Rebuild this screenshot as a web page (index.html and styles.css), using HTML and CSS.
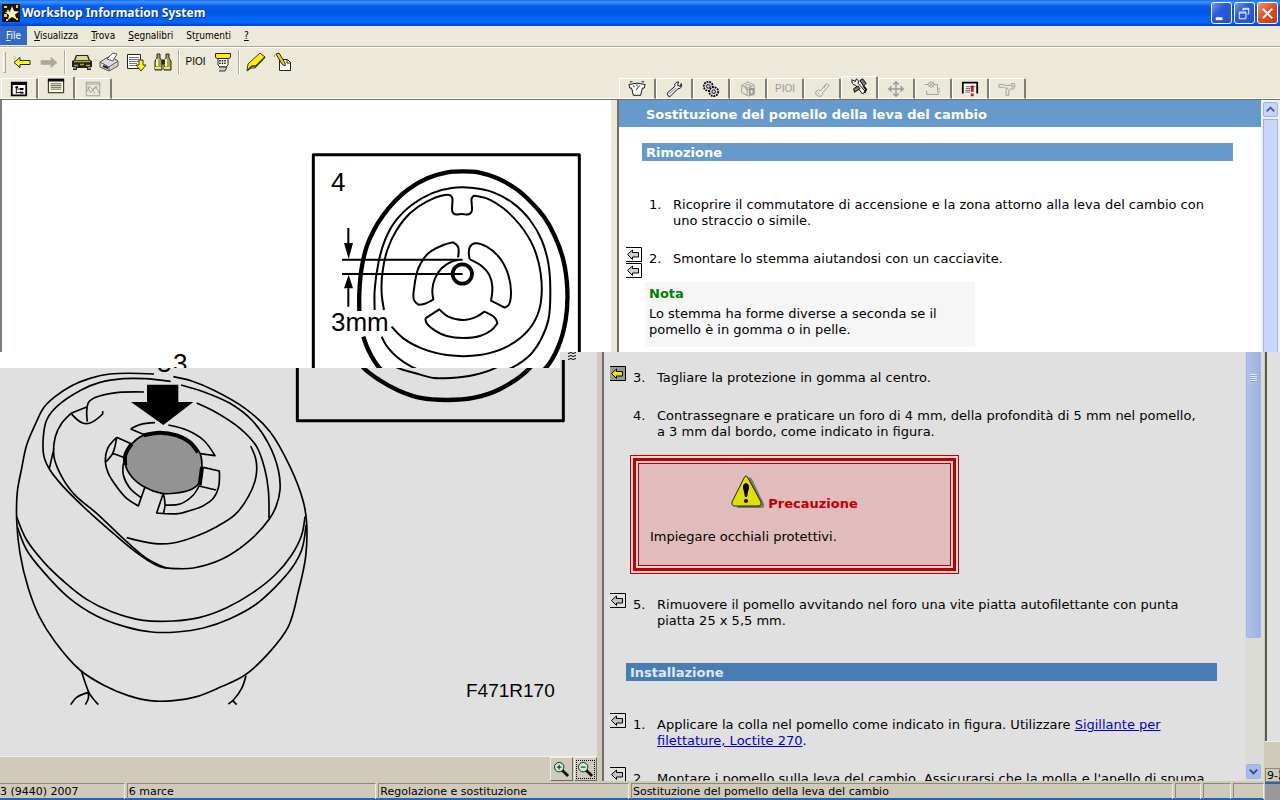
FILE: index.html
```html
<!DOCTYPE html>
<html lang="it">
<head>
<meta charset="utf-8">
<title>Workshop Information System</title>
<link rel="stylesheet" href="styles.css">
<script src="curves.js" defer></script>
</head>
<body>
<svg class="defs" aria-hidden="true">
  <defs>
    <g id="top-view" fill="none" stroke="#000" stroke-width="6" stroke-linejoin="round">
      <rect x="40" y="44" width="798" height="798" stroke-width="9"/>
      <path class="curve" stroke-width="13" d="M178 513L178 460L184 390L200 320L222 270L248 228L283 185L325 148L382 115L442 97L488 94L535 97L592 115L650 148L695 188L733 232L765 290L790 360L802 450L797 540L775 620L738 683L648 747L568 774L488 780L410 774L345 752L286 720L238 683L205 630L190 590"/>
      <path class="curve" d="M224 510L224 450L236 365L255 300L285 245L335 195L395 160L455 144L520 144L580 157L640 190L690 240L725 300L745 370L751 450L745 540L722 600L690 645L636 683L570 705L500 714L450 714L395 700L340 683L290 650L258 615L245 590"/>
      <path class="curve" d="M252 510L245 460L247 400L262 330L290 270L330 220L380 185L435 165L452 167L457 175L457 190L457 214L463 222L485 222L508 222L515 214L515 190L515 175L521 167L560 175L610 205L660 255L700 320L722 400L722 490L700 550L660 595L610 625L540 645L440 645L365 625L310 595L275 560"/>
      <path class="curve" d="M474 352L474 320L460 307L430 315L385 340L355 385L343 440L342 480L355 494L372 492L400 478L397 450L405 415L425 385L455 365L474 360"/>
      <path class="curve" d="M509 358L509 322L525 310L560 320L600 355L625 405L633 460L626 495L614 503L573 482L577 440L568 405L545 378L509 358"/>
      <path class="curve" d="M376 535L418 508L445 530L490 540L530 530L553 515L586 535L592 550L575 570L540 588L490 594L440 588L405 572L380 550L376 535"/>
      <circle cx="487" cy="402" r="29" stroke-width="11"/>
      <path d="M126 359H488M126 402H488M145 264V320M145 500V445"/>
      <path fill="#000" stroke="none" d="M132 309H159L146 357ZM132 445H159L146 404Z"/>
      <path fill="#fff" stroke="none" d="M90 514H272V587H90Z"/>
    </g>
    <g id="link-mark" stroke="#000">
      <path d="M0 .5H15.500V14.500H0" fill="none"/><path d="M1.500 7.500L6.500 3V5.500H12.500V10H6.500V12.500Z"/>
    </g>
    <g id="lens"><circle cx="6.500" cy="6.500" r="5" fill="#c4edcf" stroke="#222"/><path d="M10 10l6 6" stroke="#111" stroke-width="3"/></g>
  </defs>
</svg>

<header class="titlebar">
  <svg width="18" height="18" viewBox="0 0 18 18"><path d="M0 0h18v18H0z" fill="#111"/><path d="M10 2l2 5 5 .5-4 3 1.500 5-4.500-2.500L6 16l1-5-4-3 5-.5z" fill="#fff8c0"/><path d="M2 2h3v2H2zM5 6h2v2H5zM2 10h3v3H2zM4 15h2v2H4zM14 1h2v3h-2zM14 14h2v2h-2z" fill="#e9d817"/></svg>
  <h1>Workshop Information System</h1>
  <div class="window-buttons">
    <button aria-label="Riduci"><svg viewBox="0 0 20 20"><path d="M4 14h7v3H4z" fill="#fff"/></svg></button>
    <button aria-label="Ripristina"><svg viewBox="0 0 20 20" fill="none" stroke="#fff"><path d="M4.500 9.500h7v6h-7zM4 8.500h8M8.500 7V4.500h6v6H13M8 5.500h7"/></svg></button>
    <button class="close" aria-label="Chiudi"><svg viewBox="0 0 20 20" stroke="#fff" stroke-width="2"><path d="M5 5l10 10M15 5L5 15"/></svg></button>
  </div>
</header>

<nav class="menubar">
  <button class="selected"><u>F</u>ile</button><button><u>V</u>isualizza</button><button><u>T</u>rova</button><button><u>S</u>egnalibri</button><button>St<u>r</u>umenti</button><button><u>?</u></button>
</nav>

<div class="toolbar">
  <span class="handle"></span>
  <button aria-label="Indietro"><svg viewBox="0 0 22 20"><path d="M3 10.500l6-5v3h10v4H9v3z" fill="#ff0" stroke="#222"/></svg></button>
  <button aria-label="Avanti"><svg viewBox="0 0 22 20"><path d="M19 10.500l-6-5v3H3v4h10v3z" fill="#aca899" stroke="#b8b4a5"/></svg></button>
  <span class="separator"></span>
  <button aria-label="Veicolo"><svg viewBox="0 0 22 20"><path d="M5 3h12l2 5 2 1v6h-1v3h-4v-2H6v2H2v-3H1V9l2-1z" fill="#222"/><path d="M6 4h10l1.500 4h-13z" fill="#ddd6a0"/><path d="M3 9.500h16M3 13.500h4M15 13.500h4M9 12.500h4" stroke="#b2a431" stroke-width="1.500"/><path d="M2 16h3M17 16h3" stroke="#eee"/></svg></button>
  <button aria-label="Stampa"><svg viewBox="0 0 22 20" stroke="#555"><path d="M2 10l10-6 8 5v5l-9 5-9-4z" fill="#ddd"/><path d="M2 10l9 5 9-6M11 15v4" fill="none"/><path d="M9 7l6-6 4 1-4 7z" fill="#fff"/><path d="M5 14l5 2" stroke="#222" stroke-width="2"/><path d="M14 15l4-2" stroke="#db3"/></svg></button>
  <button aria-label="Inserisci"><svg viewBox="0 0 22 20"><path d="M2.500 2.500h13v14h-13z" fill="#fff" stroke="#222"/><path d="M4 5.500h10M4 7.500h10M4 9.500h10M4 11.500h8M4 13.500h8" stroke="#777"/><path d="M14 8h4v5h3l-5 6-5-6h3z" fill="#ff0" stroke="#333"/></svg></button>
  <button aria-label="Cerca"><svg viewBox="0 0 22 20" stroke="#222"><path d="M5 2h3v4l2 3v9H3V9l2-3zM14 2h3v4l2 3v9h-7V9l2-3z" fill="#aaa35a"/><path d="M10 8h2v4h-2z" fill="#222"/><path d="M5 7v7M14 7v7" stroke="#fff8b0" stroke-width="2"/><path d="M3 16h6M12 16h6" stroke="#ee3" stroke-width="2"/></svg></button>
  <span class="separator"></span>
  <button class="pioi">PIOI</button>
  <button aria-label="Lettore"><svg viewBox="0 0 22 20"><path d="M6 6h10v7l-2 2H8l-2-2z" fill="#fff" stroke="#222"/><path d="M3.500 1.500h15v4l-2 1h-11l-2-1z" fill="#fe0" stroke="#222"/><path d="M8 8v5M10.500 8v5M13 8v5" stroke="#111" stroke-width="1.500" stroke-dasharray="1.500 1"/><path d="M7 15h8l-2 4H7" fill="#ccb" stroke="#333"/></svg></button>
  <span class="separator"></span>
  <button aria-label="Evidenzia"><svg viewBox="0 0 22 20"><path d="M3 12L15 1l5 4-10 11H6l-4 3z" fill="#fe0" stroke="#333"/><path d="M3 18l4-4h4L20 5" fill="none" stroke="#333" stroke-width="1.500"/></svg></button>
  <button aria-label="Nota"><svg viewBox="0 0 22 20"><path d="M7.500 7.500h8l3 3v8h-11z" fill="#fff" stroke="#222"/><path d="M15 7v4h4" fill="none" stroke="#222"/><path d="M4 2l3-1 6 10v3l-3-2z" fill="#ed0" stroke="#222"/><path d="M2 4h1" stroke="#222"/></svg></button>
</div>

<div class="tabrows">
  <nav class="tabs">
    <button aria-label="Struttura"><svg viewBox="0 0 20 20"><path d="M2 3h16v14H2z" fill="#fff" stroke="#000" stroke-width="2"/><path d="M2 4h16" stroke="#000" stroke-width="3"/><path d="M7 8v7M7 10h4M7 14h4" stroke="#000" fill="none"/><path d="M6 7h3v2H6zM11 9h4v2h-4zM11 13h4v2h-4z"/></svg></button>
    <button class="active" aria-label="Testo"><svg viewBox="0 0 20 20"><path d="M1.500 2.500h17v15h-17z" fill="#fffcd4" stroke="#000"/><path d="M1 3.500h18" stroke="#000" stroke-width="3"/><path d="M4 7.500h12M4 9.500h12M4 11.500h12M4 13.500h12" stroke="#555"/></svg></button>
    <button aria-label="Grafico"><svg viewBox="0 0 20 20" fill="none" stroke="#999"><path d="M2.500 2.500h15v15h-15zM2 4.500h16M3 13l3-6 3 3 3 5M4 7l3 7 6-7 4 8M10 11l5-4"/></svg></button>
  </nav>
  <nav class="tabs doc-tabs">
    <button aria-label="Dati"><svg viewBox="0 0 20 20"><path d="M1 5q9-3 18 0l-1 4h-2l-2 8H6L4 9H2z" fill="#fff" stroke="#000"/><path d="M6 6l1 2M10 5v2M13 6l-4 5M15 2h3M2 2h3" fill="none" stroke="#000"/></svg></button>
    <button aria-label="Manutenzione"><svg viewBox="0 0 20 20"><path d="M3 14l8-7q-1-4 4-5l-1 4 3 1 1-3q2 5-4 6l-8 8q-4 1-3-4z" fill="#eee" stroke="#000"/><path d="M5 15l7-6" stroke="#777"/></svg></button>
    <button aria-label="Meccanica"><svg viewBox="0 0 20 20" fill="#ddd" stroke="#000"><circle cx="7" cy="7" r="5" stroke-width="2" stroke-dasharray="2 1"/><circle cx="13" cy="13" r="5" stroke-width="2" stroke-dasharray="2 1"/><circle cx="7" cy="7" r="2"/><circle cx="13" cy="13" r="2"/></svg></button>
    <button aria-label="Componenti"><svg viewBox="0 0 20 20" fill="none" stroke="#999"><path d="M3 6l7-4 7 4v9l-6 3-8-4zM3 6l6 3v8M9 9l7-3"/><circle cx="10" cy="8" r="3"/><path d="M12 10h4v6h-4z" stroke-width="2"/></svg></button>
    <button class="pioi disabled">PIOI</button>
    <button aria-label="Diagnosi"><svg viewBox="0 0 20 20" fill="none" stroke="#999"><path d="M8 12l7-8 3 2-7 8q0 5-5 4-5-2-2-6 2-2 4 0zM5 14l2 2M12 9l2-4"/></svg></button>
    <button class="active" aria-label="Sostituzione"><svg viewBox="0 0 20 20"><path d="M2 3l4 2 1-3q4 2 2 5l8 9-3 3-8-10q-4 0-4-6z" fill="#eee" stroke="#000"/><path d="M11 4l3-2 4 5-3 3zM4 13l5-3 2 3-6 4z" fill="#777" stroke="#000"/><path d="M15 10l3 4-2 4" stroke="#000" fill="none" stroke-width="2"/></svg></button>
    <button aria-label="Posizione"><svg viewBox="0 0 20 20" fill="none" stroke="#999"><path d="M10 2v16M2 10h16M7 5l3-3 3 3M7 15l3 3 3-3M5 7l-3 3 3 3M15 7l3 3-3 3" stroke-width="1.500"/></svg></button>
    <button aria-label="Schema"><svg viewBox="0 0 20 20" fill="none" stroke="#999"><circle cx="8" cy="5" r="3"/><path d="M6 3l4 4M10 3L6 7M1 5h4M11 5h4v5h3M15 10v3h3M3 12v4h13v-2"/></svg></button>
    <button aria-label="Avvisi"><svg viewBox="0 0 20 20"><path d="M2 15V3h16v12" fill="#fff" stroke="#000" stroke-width="2"/><path d="M5 7.500h11M5 9.500h5M5 11.500h5M5 13.500h5" stroke="#555"/><path d="M11 6h3v7h-3zM11 15h3v3h-3z" fill="#e00"/></svg></button>
    <button aria-label="Attrezzi"><svg viewBox="0 0 20 20" fill="none" stroke="#999"><path d="M1 5h5l2 1h6l1-2h3l1 3-2 3h-3l-2 1v6H9v-6l2-2-3 0-2-1H1z"/><circle cx="16" cy="7" r="1"/></svg></button>
  </nav>
</div>

<section class="upper">
  <div class="drawing">
    <svg width="612" height="252" viewBox="0 100 612 252" role="img" aria-label="Pomello, vista dall'alto">
      <use href="#top-view" transform="translate(300 140) scale(.33333)"/>
      <g class="labels"><text x="331" y="191">4</text><text x="331" y="331">3mm</text></g>
    </svg>
  </div>
  <article class="doc">
    <h2>Sostituzione del pomello della leva del cambio</h2>
    <h3>Rimozione</h3>
    <ol>
      <li><span class="marks"></span><span>1.</span><p>Ricoprire il commutatore di accensione e la zona attorno alla leva del cambio con uno straccio o simile.</p></li>
      <li><span class="marks"><svg width="16" height="15"><use href="#link-mark"/></svg><svg width="16" height="15"><use href="#link-mark"/></svg></span><span>2.</span><p>Smontare lo stemma aiutandosi con un cacciavite.</p></li>
    </ol>
    <aside class="note"><strong>Nota</strong><p>Lo stemma ha forme diverse a seconda se il pomello è in gomma o in pelle.</p></aside>
  </article>
  <div class="scrollbar"><button aria-label="Su"><svg viewBox="0 0 14 14"><path d="M3 9l4-4 4 4" fill="none" stroke="#4d6185" stroke-width="2"/></svg></button><div class="thumb"></div></div>
</section>

<section class="lower">
  <div class="main">
    <div class="panes">
      <div class="left">
        <div class="drawing">
          <svg width="597" height="403" viewBox="0 352 597 403" role="img" aria-label="Pomello della leva del cambio">
            <defs>
              <clipPath id="above"><path d="M0 352H560V368H0z"/></clipPath>
              <clipPath id="below"><path d="M0 368H560V360H597V755H0z"/></clipPath>
            </defs>
            <g clip-path="url(#above)">
              <path d="M0 352h560v16H0z" fill="#fff"/>
              <use href="#top-view" transform="translate(300 140) scale(.33333)"/>
              <text class="labels" x="173" y="372">3</text>
            </g>
            <g clip-path="url(#below)">
              <use href="#top-view" transform="translate(284 140) scale(.33333)"/>
              <text class="labels" x="157" y="372">3</text>
            </g>
            <path d="M568 353.500l3-1 2 1 3-1M568 356.500l3-1 2 1 3-1M568 359.500l3-1 2 1 3-1" stroke="#000" fill="none"/>
            <g transform="translate(0 340) scale(.33333)" fill="none" stroke="#000" stroke-width="5" stroke-linejoin="round">
              <path class="curve" d="M462 102L330 102L270 115L215 137L165 170L132 202L105 255L80 315L65 385L52 455L50 540L60 640L85 745L118 830L165 905L240 990L310 1035L385 1067L450 1082L520 1082L590 1070L660 1042L735 1005L810 935L865 860L895 755L917 650L920 550L910 485L870 380L810 275L735 205L640 150L575 123L520 110"/>
              <path class="curve" d="M512 124L435 116L370 116L300 127L245 149L170 200L140 240L130 290L132 350L150 390L190 440L250 500L340 580L420 645L480 680L535 686L580 684L665 658L745 605L808 537L828 500L840 450L835 390L805 310L755 240L690 190L610 155L543 135"/>
              <path class="curve" d="M432 156L335 160L275 178L264 190L262 245M213 220L262 200M213 220L248 249L270 249L308 222L308 213M213 220L185 250L166 290L162 350L180 400L220 460L290 520L380 605L440 655L500 685M148 385L162 325M590 189L650 218L720 265L770 320L795 390L805 450L807 535M752 318L768 360L768 410L745 470L705 524L650 560L590 588L520 609L465 611L380 593"/>
              <path class="curve" d="M392 267L420 254L465 248M392 267L435 285M505 255L560 270L610 300L645 347L595 340M350 292L395 312M350 292L323 325L316 365L325 400L350 440L380 475L415 498L435 440M318 365L338 340L350 292M338 340L370 352M422 472L390 445L370 405L370 370M610 382L658 393L656 440L640 475L610 497L560 515L535 521L470 519L490 460M490 460L495 495L490 521M495 495L540 492L580 465L597 438L648 450"/>
              <path class="curve" d="M378 340L395 312L430 286L480 278L530 286L570 307L600 340L606 380L600 425L575 448L530 459L485 460L435 442L395 410L376 374L378 340" fill="#939393"/>
              <path class="curve" stroke-width="12" d="M430 286L480 278L530 286L570 307L594 337M395 312L376 345L376 376M606 382L599 436"/>
              <path class="curve" d="M50 530L80 600L135 670L190 723L260 778L335 815L430 841L520 843L600 832L680 803L760 757L825 705L875 645L905 585L915 530M52 560L80 630L130 695L205 772L290 828L375 860L455 876L530 876L610 864L690 836L765 795L825 742L875 685L905 630L918 555"/>
              <path class="curve" d="M244 992L258 1035L268 1060L295 1094M212 1094L230 1072L265 1057L265 1075L256 1094M738 1007L725 1045L700 1080L685 1092M698 1082L710 1094"/>
              <path d="M441 134H535V186H580L490 255L393 186H441Z" fill="#000" stroke="none"/>
            </g>
            <text class="code" x="466" y="697">F471R170</text>
          </svg>
        </div>
        <div class="zoombar">
          <button aria-label="Ingrandisci"><svg viewBox="0 0 18 18"><use href="#lens"/><path d="M4 6.500h5M6.500 4v5" stroke="#111"/></svg></button>
          <button class="focused" aria-label="Riduci zoom"><svg viewBox="0 0 18 18"><use href="#lens"/><path d="M4 6.500h5" stroke="#111"/></svg></button>
        </div>
      </div>
      <article class="doc">
        <ol start="3">
          <li><span class="marks"><svg class="visited" width="16" height="15"><use href="#link-mark"/></svg></span><span>3.</span><p>Tagliare la protezione in gomma al centro.</p></li>
          <li><span class="marks"></span><span>4.</span><p>Contrassegnare e praticare un foro di 4 mm, della profondità di 5 mm nel pomello, a 3 mm dal bordo, come indicato in figura.</p></li>
        </ol>
        <aside class="caution"><div><div>
          <strong><svg width="34" height="34" viewBox="0 0 34 34"><path d="M17 3q2-2 4 1l12 25q1 4-3 4H6z" fill="#777"/><path d="M13 3q2-4 4 0l13 24q1 3-2 4H3q-3-1-2-4z" fill="#e0e000" stroke="#222"/><path d="M15 8q5 1 2 9l-1 5h-2l-1-5q-3-8 2-9z"/><circle cx="15" cy="26" r="2"/></svg> Precauzione</strong>
          <p>Impiegare occhiali protettivi.</p>
        </div></div></aside>
        <ol start="5">
          <li><span class="marks"><svg width="16" height="15"><use href="#link-mark"/></svg></span><span>5.</span><p>Rimuovere il pomello avvitando nel foro una vite piatta autofilettante con punta piatta 25 x 5,5 mm.</p></li>
        </ol>
        <h3>Installazione</h3>
        <ol>
          <li><span class="marks"><svg width="16" height="15"><use href="#link-mark"/></svg></span><span>1.</span><p>Applicare la colla nel pomello come indicato in figura. Utilizzare <a href="#">Sigillante per filettature, Loctite 270</a>.</p></li>
          <li><span class="marks"><svg width="16" height="15"><use href="#link-mark"/></svg></span><span>2.</span><p>Montare i pomello sulla leva del cambio. Assicurarsi che la molla e l'anello di spuma</p></li>
        </ol>
      </article>
      <div class="scrollbar"><div class="thumb"><i></i></div><div class="track"></div><button aria-label="Giù"><svg viewBox="0 0 14 14"><path d="M3 5l4 4 4-4" fill="none" stroke="#344d78" stroke-width="2"/></svg></button></div>
    </div>
    <footer class="status"><span>3 (9440) 2007</span><span>6 marce</span><span>Regolazione e sostituzione</span><span>Sostituzione del pomello della leva del cambio</span><span></span><span></span><span></span></footer>
  </div>
  <div class="gutter"><div class="gutter-page"></div><div class="gutter-bar"></div><span>9-2</span><div class="gutter-end"></div></div>
</section>
</body>
</html>
```
FILE: styles.css
```css
* { box-sizing: border-box; }
body {
  margin: 0; height: 100vh; overflow: hidden; display: flex; flex-direction: column;
  background: #ece9d8; color: #000;
  font: 11px/14px "DejaVu Sans", sans-serif;
}
button { border: 0; padding: 0; background: none; color: inherit; font: inherit; display: block; }
svg { display: block; }
p, h1, h2, h3, ol { margin: 0; padding: 0; }
.defs { position: absolute; width: 0; height: 0; }

.titlebar {
  flex: none; height: 26px; display: flex; align-items: center; padding: 0 2px; gap: 2px;
  background: linear-gradient(#1c6cec, #3b96fa 2px, #0a5ce6 6px, #0055e5 12px, #0062fa 18px, #0066ff 22px, #0042c8);
}
.titlebar h1 { flex: 1; color: #fff; font: 700 12px/18px "Noto Sans", sans-serif; text-shadow: 1px 1px #0a2a8c; }
.window-buttons { display: flex; gap: 2px; }
.window-buttons button { width: 21px; height: 22px; border: 1px solid #fff; border-radius: 3px; background: linear-gradient(135deg, #7197f0, #2a5bdc 40%, #2453d0); }
.window-buttons .close { background: linear-gradient(135deg, #ee9273, #dd4b22 50%, #c93c14); }

.menubar { flex: none; height: 21px; display: flex; gap: 1px; align-items: flex-start; border-bottom: 1px solid #aca899; box-shadow: 0 1px #fff; font: 10px/19px "DejaVu Sans Condensed", "DejaVu Sans", sans-serif; }
.menubar button { height: 19px; padding: 0 6px; }
.menubar .selected { background: #316ac5; color: #fff; }

.toolbar { flex: none; height: 29px; display: flex; align-items: center; padding: 1px 4px 0 3px; }
.toolbar button { width: 27px; height: 24px; }
.toolbar button svg { width: 22px; height: 20px; margin: 0 auto; }
.handle { width: 3px; height: 22px; border: 1px solid; border-color: #fff #aca899 #aca899 #fff; margin-right: 2px; }
.separator { width: 2px; height: 24px; margin: 0 2px; border-left: 1px solid #aca899; border-right: 1px solid #fff; }
.toolbar .pioi, .tabs .pioi { font: 10px/20px "Liberation Sans", sans-serif; }
.disabled { color: #999; }

.tabrows { flex: none; height: 23px; display: grid; grid-template-columns: 617fr 663fr; }
.tabs { display: flex; align-items: flex-end; padding-left: 1px; border-bottom: 1px solid #aca899; box-shadow: inset 0 -1px #fff; }
.tabs button { width: 37px; height: 21px; border: 1px solid; border-color: #fff #807d70 #fff #fff; border-right-width: 2px; border-radius: 2px 2px 0 0; }
.tabs button svg { width: 18px; height: 18px; margin: 0 auto; }
.tabs .active { height: 23px; border-bottom-color: #ece9d8; }
.tabs .active svg { margin-bottom: 3px; }
.doc-tabs { padding-left: 2px; }

.upper { flex: none; display: grid; grid-template-columns: 617fr 644fr 19px; background: #fff; border-top: 1px solid #716f64; }
.upper .drawing { border-left: 2px solid #807d70; border-right: 6px solid #ece9d8; min-width: 0; overflow: hidden; }
.upper .drawing svg { margin-left: -2px; }
.labels { font: 26px "Liberation Sans", sans-serif; }
.code { font: 19px "Liberation Sans", sans-serif; }
.doc { min-width: 0; overflow: hidden; font: 13px/16px "DejaVu Sans", sans-serif; border-left: 2px solid #716f64; }
.doc h2 { background: #69c; color: #fff; font-size: 13px; line-height: 25px; padding: 2px 0 0 27px; }
.doc h3 { background: #69c; color: #fff; font-size: 13px; line-height: 17px; margin: 16px 28px 36px 23px; padding: 1px 0 0 4px; }
.doc ol { list-style: none; display: flex; flex-direction: column; gap: 22px; }
.doc li { display: grid; grid-template-columns: 15px 16px 1fr; column-gap: 8px; padding: 0 39px 0 7px; }
.marks { height: 0; margin-top: -4px; display: flex; flex-direction: column; gap: 1px; }
.marks svg { flex: none; width: 16px; fill: #d0d0d0; }
.note { width: 330px; min-height: 65px; margin: 15px 0 5px 26px; padding: 4px 20px 8px 4px; background: #f6f6f6; }
.note strong { color: #008000; }
.note p { margin-top: 4px; }

.scrollbar { display: flex; flex-direction: column; padding: 2px; gap: 2px; background: #f0f0ec; }
.scrollbar button { height: 15px; border: 1px solid #9fb5e8; border-radius: 2px; background: #c6d4fc; }
.thumb { border: 1px solid #9fb5e8; background: #c8d6fb; flex: 1; }
.upper .scrollbar { padding-bottom: 0; }
.upper .thumb { border-bottom: 0; }

.lower { flex: 1; min-height: 0; display: flex; background: #e0e0e0; }
.main { flex: 1; min-width: 0; display: flex; flex-direction: column; }
.panes { flex: 1; min-height: 0; display: grid; grid-template-columns: 602fr 643fr 19px; grid-template-rows: minmax(0, 1fr); border-bottom: 2px solid #cfcaba; }
.left { min-width: 0; display: flex; flex-direction: column; border-right: 5px solid #cfcaba; }
.left .drawing { flex: 1; min-height: 0; overflow: hidden; }
.zoombar { height: 25px; display: flex; justify-content: flex-end; gap: 1px; background: #cfcaba; border-top: 1px solid #f2f0e6; }
.zoombar button { width: 23px; height: 24px; padding: 2px; border: 1px solid; border-color: #f2f0e6 #706d60 #706d60 #f2f0e6; }
.zoombar .focused svg { outline: 1px dotted #000; }
.lower .doc { padding-top: 18px; }
.lower .doc h3 { background: #487db3; color: #dfe8f0; margin-top: 34px; margin-left: 22px; }
.lower .doc li { padding-left: 6px; }
.lower .marks svg { fill: #c4c4c4; }
.lower .marks .visited { fill: #e6e600; background: #999; }
.doc a { color: #0000d0; }
.caution { width: 329px; margin: 15px 0 23px 26px; border: 1px solid #c00000; padding: 2px; background: #f0d4d4; }
.caution > div { border: 3px solid #c00000; padding: 2px; }
.caution > div > div { border: 1px solid #c00000; padding: 11px; height: 103px; background: #e0bcbc; }
.caution strong { display: flex; justify-content: center; align-items: flex-end; gap: 3px; color: #c00000; }
.caution strong svg { margin-bottom: 3px; }
.caution p { margin-top: 17px; }
.lower .scrollbar { padding: 0 3px 2px 1px; gap: 0; background: #dcdcd6; }
.lower .thumb { flex: 285; background: linear-gradient(90deg, #b0c0ea, #9db2e2); border-top: 0; border-radius: 0 0 2px 2px; }
.lower .track { flex: 126; }
.thumb i { display: block; width: 7px; height: 8px; margin: 22px auto 0; background: repeating-linear-gradient(#e4ebff 0 1px, #8ca3d8 1px 2px); }
.lower .scrollbar button { background: #a9bce9; }

.status { flex: none; height: 17px; display: grid; grid-template-columns: 125fr 250fr 251fr 543fr 26px 28px 31px; gap: 2px; background: #cfcaba; border-bottom: 2px solid #2464b8; }
.status span { border: 1px solid; border-color: #8c8979 #efecdf #cfcaba #8c8979; border-bottom: 0; padding-left: 1px; white-space: nowrap; line-height: 15px; }
.status span:first-child { padding-left: 0; border-left: 0; }
.gutter { width: 16px; display: flex; flex-direction: column; border-left: 1px solid #cfcaba; overflow: hidden; }
.gutter-page { flex: 1; border-left: 2px solid #5c5a50; }
.gutter-bar { height: 27px; background: #cfcaba; border-top: 1px solid #f2f0e6; }
.gutter span { height: 14px; line-height: 13px; padding-left: 1px; background: #cfcaba; border: 1px solid #8c8979; white-space: nowrap; }
.gutter-end { height: 18px; background: #999; border-top: 2px solid #2464b8; }
```
FILE: curves.js
```js
// Rounds the line drawings: joins the points of each .curve path with
// Catmull-Rom segments, keeping sharp corners as corners.
function tangent(prev, cur, next) {
  if (!prev || !next) return [0, 0];
  const a = [cur[0] - prev[0], cur[1] - prev[1]];
  const b = [next[0] - cur[0], next[1] - cur[1]];
  const la = Math.hypot(...a), lb = Math.hypot(...b);
  const cos = (a[0] * b[0] + a[1] * b[1]) / (la * lb);
  if (cos < 0.6) return [0, 0];
  const x = a[0] / la + b[0] / lb, y = a[1] / la + b[1] / lb;
  const l = Math.hypot(x, y);
  return [x / l, y / l];
}

function smooth(points) {
  const closed = points.length > 3 && points[0].join() === points[points.length - 1].join();
  const n = points.length;
  const dirs = points.map((p, i) => tangent(
    i > 0 ? points[i - 1] : closed ? points[n - 2] : null,
    p,
    i < n - 1 ? points[i + 1] : closed ? points[1] : null
  ));
  let d = "M" + points[0].join(" ");
  for (let i = 1; i < n; i++) {
    const p = points[i - 1], q = points[i];
    const k = Math.hypot(q[0] - p[0], q[1] - p[1]) / 3;
    d += `C${p[0] + dirs[i - 1][0] * k} ${p[1] + dirs[i - 1][1] * k} ${q[0] - dirs[i][0] * k} ${q[1] - dirs[i][1] * k} ${q[0]} ${q[1]}`;
  }
  return d;
}

document.querySelectorAll("path.curve").forEach(path => {
  const parts = path.getAttribute("d").split("M").filter(Boolean);
  path.setAttribute("d", parts.map(part =>
    smooth(part.split("L").map(pair => pair.trim().split(" ").map(Number)))
  ).join(""));
});
```
